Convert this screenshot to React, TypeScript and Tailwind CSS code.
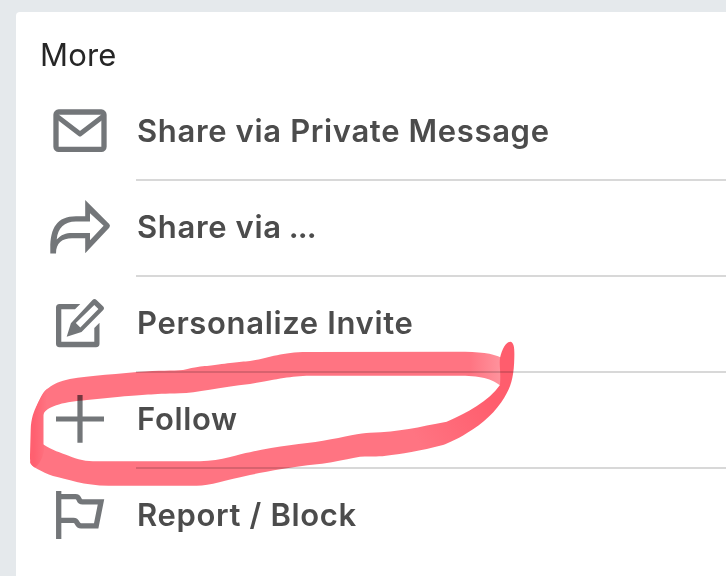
import type { ReactNode } from "react";

function Icon({ children }: { children: ReactNode }) {
    return (
        <svg viewBox="0 0 64 64" className="size-16 shrink-0 text-[#737679]" fill="none" stroke="none">
            {children}
        </svg>
    );
}

const icons = {
    mail: (
        <Icon>
            <g stroke="currentColor">
                <rect x="8" y="12" width="48" height="37.4" rx="2.7" strokeWidth="5.3" />
                <path d="M8.5 16 L32 34 L55.5 16" strokeWidth="4.8" strokeLinejoin="round" />
            </g>
        </Icon>
    ),
    share: (
        <Icon>
            <path
                fill="currentColor"
                fillRule="evenodd"
                d="M37.2 4 L61.2 28 Q62.8 29.8 61.2 31.7 L37.2 57.3 V42.3 H24 C14 42.3 8 47 8 57.5 H2.3 V52 C2.3 32 9 20.2 28 20.2 H37.2 Z M42 17.3 V25.6 H28 C16 25.6 10 32 8.7 43.5 C13 38.5 18 36.9 24 36.9 H42 V44.3 L55.6 29.8 Z"
            />
        </Icon>
    ),
    edit: (
        <Icon>
            <g fill="currentColor">
                <path d="M32.3 12 L27 17.3 H13.3 V49.7 H46.3 V36 L51.5 30.8 V51.8 Q51.5 55.2 48 55.2 H11.5 Q8 55.2 8 51.8 V15.5 Q8 12 11.5 12 Z" />
                <path
                    fillRule="evenodd"
                    d="M18.7 44.7 L22.9 31.2 L44.5 8 Q46.5 6 48.5 8 L55 14.2 Q57 16.2 55 18.2 L33.5 39.9 Z M46.3 12.9 L27.8 31 L32.3 35.5 L50.4 17 Z"
                />
            </g>
        </Icon>
    ),
    plus: (
        <Icon>
            <path d="M8 31 H56 M32 7 V54.7" stroke="currentColor" strokeWidth="5.2" />
        </Icon>
    ),
    flag: (
        <Icon>
            <path
                d="M10.7 7 V55 M10.7 12.6 H27.5 C32.5 12.6 29.5 17.8 34.5 17.8 H53 L48.2 41.8 H33 C28 41.8 30.5 36.4 25.5 36.4 H10.7"
                stroke="currentColor"
                strokeWidth="5.3"
            />
        </Icon>
    ),
};

const items = [
    { icon: icons.mail, label: "Share via Private Message" },
    { icon: icons.share, label: "Share via", suffix: "..." },
    { icon: icons.edit, label: "Personalize Invite" },
    { icon: icons.plus, label: "Follow" },
    { icon: icons.flag, label: "Report / Block" },
];

// hand drawn marker loop around "Follow"
function Marker() {
    return (
        <svg viewBox="0 0 726 576" className="pointer-events-none absolute top-0 left-0 h-[576px] w-[726px] mix-blend-multiply blur-[0.6px]">
            <defs>
                <linearGradient id="tail" gradientUnits="userSpaceOnUse" x1="470" y1="0" x2="502" y2="0">
                    <stop offset="0" stopColor="#ff7482" />
                    <stop offset="1" stopColor="#ff949e" />
                </linearGradient>
                <linearGradient id="hook" gradientUnits="userSpaceOnUse" x1="420" y1="445" x2="492" y2="400">
                    <stop offset="0" stopColor="#ff7482" />
                    <stop offset="1" stopColor="#ff5d6d" />
                </linearGradient>
                <linearGradient id="side" gradientUnits="userSpaceOnUse" x1="34" y1="0" x2="47" y2="0">
                    <stop offset="0" stopColor="#ff6070" />
                    <stop offset="1" stopColor="#ff7482" />
                </linearGradient>
            </defs>
            <path
                fill="url(#tail)"
                d="M36 408 C42 394 46 386 63 380.7 C80 376 108 375 137 372 C160 370 172 371 183 370 C196 367 201 366 207 366 C230 363 238 362 250 361 C270 358 281 352 307 352 L457 351.7 C480 351.7 492 353 502 358 V387 C492 378 480 375.7 457 375.7 L310 375.7 C290 376 278 379 250 384 C220 387 196 393 180 393.3 C150 394 145 395 120 396.7 L87 400 C65 402 49 405 43 414 Z"
            />
            <path
                fill="url(#hook)"
                d="M43.5 444.5 C52 450 61 453 68 455.5 C78 460 86 461.3 97 461.3 L200 461.3 C222 461 239 454 250 452.3 C276 446 303 444 323 440.7 C345 437 361 432.7 370 432.7 C400 432 418 427 446.7 421.7 C467 413 489 401 500 385 C501 370 499 366 500 358 C502 349 506 341.5 510.7 341.7 C514.5 343 514.5 350 514.3 358 C514 373 512 384 506.7 393.3 C501 405 488 420 473 429.3 C460 438 448 443.5 443 445 C421 451 400 454 386 455.7 C376 457 370 456 360 456.7 C341 460 331 463 317 464.3 C290 467 270 471 250 475 C226 480 210 485.7 196.7 485.7 L110 485.7 C85 486 67 479 53 476 C42 472 30 466 30 462 Z"
            />
            <path
                fill="url(#side)"
                d="M30.7 430 C31 418 34 411 37 405 C41 397 43 391 48 388.5 C57 386 58 398 49 407 C45 410 43.5 412 43.5 417 V444 C46 450 41 464 35 467.5 C30 465 30 462 30 455 Z"
            />
        </svg>
    );
}

export default function App() {
    return (
        <div className="relative h-[576px] w-[726px] overflow-hidden bg-[#e5e9ec] pt-3 pl-4 font-['Inter',sans-serif]">
            <div className="h-[564px] rounded-tl-[4px] bg-white">
                <h1 className="flex h-[73px] items-center pt-[11px] pl-6 text-[31px] leading-none font-normal tracking-[0.2px] text-[#262626]">
                    More
                </h1>
                <ul>
                    {items.map((item) => (
                        <li key={item.label} className="group flex h-24 pl-8">
                            <div className="flex items-center pb-0.5">{item.icon}</div>
                            <div className="ml-6 flex flex-1 items-center border-b-2 border-[#d8d8d8] pb-1 pl-px group-last:border-transparent">
                                <span className="text-[31px] leading-none font-semibold tracking-[0.65px] text-[#4c4c4c]">
                                    {item.label}
                                    {item.suffix && <span className="tracking-[-0.8px]"> {item.suffix}</span>}
                                </span>
                            </div>
                        </li>
                    ))}
                </ul>
            </div>
            <Marker />
        </div>
    );
}
